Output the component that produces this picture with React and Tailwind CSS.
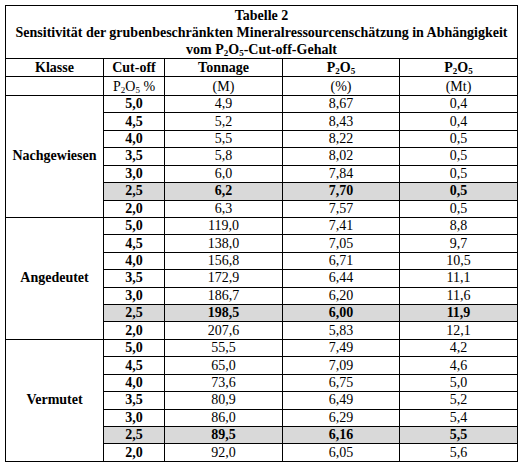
import React from "react";

const groups = [
    {
        name: "Nachgewiesen",
        rows: [
            ["5,0", "4,9", "8,67", "0,4"],
            ["4,5", "5,2", "8,43", "0,4"],
            ["4,0", "5,5", "8,22", "0,5"],
            ["3,5", "5,8", "8,02", "0,5"],
            ["3,0", "6,0", "7,84", "0,5"],
            ["2,5", "6,2", "7,70", "0,5"],
            ["2,0", "6,3", "7,57", "0,5"],
        ],
    },
    {
        name: "Angedeutet",
        rows: [
            ["5,0", "119,0", "7,41", "8,8"],
            ["4,5", "138,0", "7,05", "9,7"],
            ["4,0", "156,8", "6,71", "10,5"],
            ["3,5", "172,9", "6,44", "11,1"],
            ["3,0", "186,7", "6,20", "11,6"],
            ["2,5", "198,5", "6,00", "11,9"],
            ["2,0", "207,6", "5,83", "12,1"],
        ],
    },
    {
        name: "Vermutet",
        rows: [
            ["5,0", "55,5", "7,49", "4,2"],
            ["4,5", "65,0", "7,09", "4,6"],
            ["4,0", "73,6", "6,75", "5,0"],
            ["3,5", "80,9", "6,49", "5,2"],
            ["3,0", "86,0", "6,29", "5,4"],
            ["2,5", "89,5", "6,16", "5,5"],
            ["2,0", "92,0", "6,05", "5,6"],
        ],
    },
];

const P2O5 = () => (
    <>
        P<sub className="text-[9px]">2</sub>O<sub className="text-[9px]">5</sub>
    </>
);

export default function App() {
    return (
        <div className="w-[524px] h-[466px] bg-white pl-[5px] pt-[5px] text-black text-[14px] leading-[17px] font-['Liberation_Serif','DejaVu_Serif',serif]">
            <table className="border-collapse table-fixed w-[512px] text-center">
                <colgroup>
                    <col className="w-[98px]" />
                    <col className="w-[61px]" />
                    <col className="w-[118px]" />
                    <col className="w-[117px]" />
                    <col className="w-[118px]" />
                </colgroup>
                <thead>
                    <tr className="h-[53px]">
                        <th colSpan={5} className="border border-black font-bold p-0 leading-[17px]">
                            Tabelle 2<br />
                            Sensitivität der grubenbeschränkten Mineralressourcenschätzung in Abhängigkeit<br />
                            vom <P2O5 />-Cut-off-Gehalt
                        </th>
                    </tr>
                    <tr className="h-[18px] leading-[15px]">
                        <th className="border border-black font-bold p-0">Klasse</th>
                        <th className="border border-black font-bold p-0">Cut-off</th>
                        <th className="border border-black font-bold p-0">Tonnage</th>
                        <th className="border border-black font-bold p-0"><P2O5 /></th>
                        <th className="border border-black font-bold p-0"><P2O5 /></th>
                    </tr>
                    <tr className="h-[19px] leading-[15px]">
                        <td className="border border-black p-0"></td>
                        <td className="border border-black p-0"><P2O5 /> %</td>
                        <td className="border border-black p-0">(M)</td>
                        <td className="border border-black p-0">(%)</td>
                        <td className="border border-black p-0">(Mt)</td>
                    </tr>
                </thead>
                <tbody className="leading-[14px]">
                    {groups.map(group => (
                        group.rows.map((row, i) => {
                            const hi = row[0] === "2,5";
                            const cell = `border-x border-b border-black p-0 ${hi ? 'bg-[#d9d9d9] font-bold' : ''}`;
                            return (
                                <tr key={group.name + i} className="h-[17.43px]">
                                    {i === 0 && <td rowSpan={7} className="border border-black font-bold p-0 align-middle">{group.name}</td>}
                                    <td className={`${cell} font-bold`}>{row[0]}</td>
                                    <td className={cell}>{row[1]}</td>
                                    <td className={cell}>{row[2]}</td>
                                    <td className={cell}>{row[3]}</td>
                                </tr>
                            )
                        })
                    ))}
                </tbody>
            </table>
        </div>
    )
}
